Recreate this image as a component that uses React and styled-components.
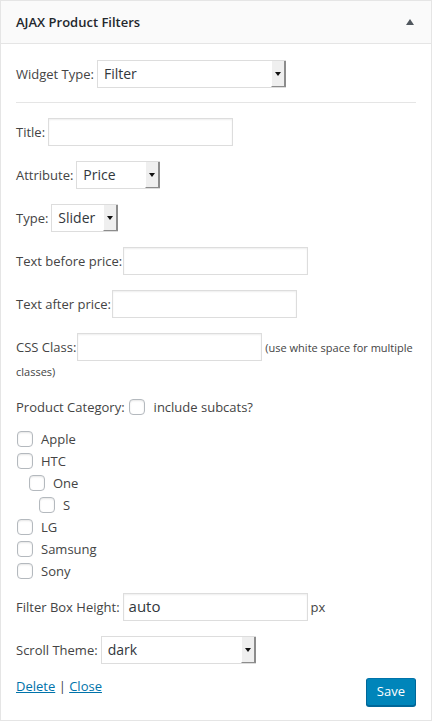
import React from 'react'
import styled, { createGlobalStyle } from 'styled-components'

const GlobalStyle = createGlobalStyle`
  * { box-sizing: border-box; }
  body {
    margin: 0;
    background: #fff;
    font-family: "Open Sans", "Liberation Sans", sans-serif;
    font-size: 13px;
    color: #444;
  }
`

const Panel = styled.div`
  width: 432px;
  border: 1px solid #e5e5e5;
  background: #fff;
`

const Header = styled.div`
  height: 43px;
  display: flex;
  align-items: center;
  justify-content: space-between;
  padding: 0 17px 0 15px;
  background: #fafafa;
  border-bottom: 1px solid #e5e5e5;
`

const Title = styled.h3`
  margin: 0;
  font-size: 13px;
  font-weight: 600;
  color: #23282d;
  line-height: 1;
`

const Body = styled.div`
  padding: 16px 15px 14px;
`

const Row = styled.div`
  display: flex;
  align-items: center;
  height: ${(p) => p.h || 28}px;
  margin-bottom: ${(p) => (p.mb === undefined ? 15 : p.mb)}px;
`

const Label = styled.label`
  margin-right: ${(p) => (p.gap === undefined ? 3 : p.gap)}px;
  width: ${(p) => (p.w ? `${p.w}px` : 'auto')};
  flex: none;
  white-space: nowrap;
  line-height: 20px;
`

const TextInput = styled.div`
  width: ${(p) => p.w || 185}px;
  height: 28px;
  border: 1px solid #ddd;
  box-shadow: inset 0 1px 2px rgba(0, 0, 0, 0.07);
  background: #fff;
  color: #32373c;
  font-size: 15px;
  line-height: 25px;
  padding: 0 5px;
`

const InlineInput = styled(TextInput)`
  display: inline-block;
  vertical-align: top;
`

const Select = styled.div`
  width: ${(p) => p.w}px;
  height: 28px;
  display: flex;
  border: 1px solid #ddd;
  border-right: none;
  background: #fff;
  color: #32373c;
  font-size: 14px;
`

const SelectValue = styled.span`
  flex: 1;
  padding-left: 6px;
  line-height: 25px;
`

const SelectButton = styled.span`
  width: 15px;
  display: flex;
  align-items: center;
  justify-content: center;
  background: #efefef;
  border-left: 1px solid #fff;
  border-right: 2px solid #8c8c8c;
  border-bottom: 1px solid #8c8c8c;
`

const Hr = styled.hr`
  margin: 14px 0 15px;
  border: none;
  border-top: 1px solid #e5e5e5;
  height: 0;
`

const NoteBlock = styled.div`
  line-height: 20px;
  margin-bottom: 15px;
`

const FirstLine = styled.span`
  display: inline-block;
  height: 28px;
  line-height: 28px;
  margin-right: 1px;
`

const Small = styled.small`
  font-size: 11px;
  margin-left: 3px;
`

const Check = styled.span`
  display: inline-block;
  width: 16px;
  height: 16px;
  flex: none;
  border: 1px solid #b4b9be;
  border-radius: 4px;
  background: #fff;
  box-shadow: inset 0 1px 2px rgba(0, 0, 0, 0.1);
  margin-left: ${(p) => p.indent || 1}px;
  margin-right: ${(p) => p.gap || 8}px;
`

const CatList = styled.ul`
  list-style: none;
  margin: 0 0 11px;
  padding: 0;
`

const CatItem = styled.li`
  display: flex;
  align-items: center;
  height: 22px;
`

const Px = styled.span`
  margin-left: 3px;
`

const Footer = styled.div`
  display: flex;
  justify-content: space-between;
  align-items: flex-start;
`

const Links = styled.div`
  line-height: 16px;
`

const Link = styled.a`
  color: #0073aa;
  text-decoration: underline;
`

const SaveButton = styled.button`
  height: 28px;
  padding: 0 10px 2px;
  font-family: inherit;
  font-size: 13px;
  color: #fff;
  background: #0085ba;
  border: 1px solid #0073aa;
  border-color: #0073aa #006799 #006799;
  border-radius: 3px;
  box-shadow: 0 1px 0 #006799;
  cursor: pointer;
`

const Arrow = () => (
  <svg width="8" height="4" viewBox="0 0 8 4">
    <polygon points="1,0 7,0 4,4" fill="#111" />
  </svg>
)

const Dropdown = ({ w, value }) => (
  <Select w={w}>
    <SelectValue>{value}</SelectValue>
    <SelectButton>
      <Arrow />
    </SelectButton>
  </Select>
)

const categories = [
  { name: 'Apple', indent: 1 },
  { name: 'HTC', indent: 1 },
  { name: 'One', indent: 13 },
  { name: 'S', indent: 23 },
  { name: 'LG', indent: 1 },
  { name: 'Samsung', indent: 1 },
  { name: 'Sony', indent: 1 },
]

export default function App() {
  return (
    <>
      <GlobalStyle />
      <Panel>
        <Header>
          <Title>AJAX Product Filters</Title>
          <svg width="8" height="6" viewBox="0 0 8 6">
            <polygon points="4,0 8,6 0,6" fill="#50575e" />
          </svg>
        </Header>
        <Body>
          <Row mb={0}>
            <Label>Widget Type:</Label>
            <Dropdown w={189} value="Filter" />
          </Row>
          <Hr />
          <Row>
            <Label>Title:</Label>
            <TextInput />
          </Row>
          <Row>
            <Label>Attribute:</Label>
            <Dropdown w={84} value="Price" />
          </Row>
          <Row>
            <Label>Type:</Label>
            <Dropdown w={67} value="Slider" />
          </Row>
          <Row>
            <Label w={104}>Text before price:</Label>
            <TextInput />
          </Row>
          <Row>
            <Label w={93}>Text after price:</Label>
            <TextInput />
          </Row>
          <NoteBlock>
            <FirstLine>CSS Class:</FirstLine>
            <InlineInput />
            <Small>(use white space for multiple classes)</Small>
          </NoteBlock>
          <Row h={20} mb={11}>
            <Label gap={3}>Product Category:</Label>
            <Check indent={0} gap={9} />
            <span>include subcats?</span>
          </Row>
          <CatList>
            {categories.map((c) => (
              <CatItem key={c.name}>
                <Check indent={c.indent} />
                {c.name}
              </CatItem>
            ))}
          </CatList>
          <Row>
            <Label>Filter Box Height:</Label>
            <TextInput>auto</TextInput>
            <Px>px</Px>
          </Row>
          <Row mb={14}>
            <Label>Scroll Theme:</Label>
            <Dropdown w={155} value="dark" />
          </Row>
          <Footer>
            <Links>
              <Link href="#">Delete</Link> | <Link href="#">Close</Link>
            </Links>
            <SaveButton>Save</SaveButton>
          </Footer>
        </Body>
      </Panel>
    </>
  )
}
